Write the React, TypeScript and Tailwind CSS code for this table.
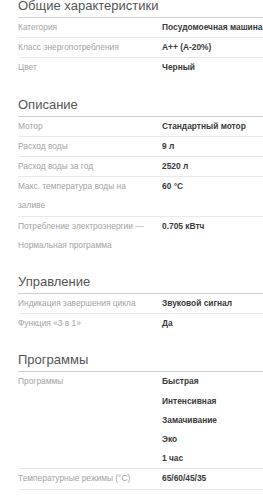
const sections: { title: string; rows: { label: string; values: string[] }[] }[] = [
  {
    title: 'Общие характеристики',
    rows: [
      { label: 'Категория', values: ['Посудомоечная машина'] },
      { label: 'Класс энергопотребления', values: ['A++ (A-20%)'] },
      { label: 'Цвет', values: ['Черный'] },
    ],
  },
  {
    title: 'Описание',
    rows: [
      { label: 'Мотор', values: ['Стандартный мотор'] },
      { label: 'Расход воды', values: ['9 л'] },
      { label: 'Расход воды за год', values: ['2520 л'] },
      { label: 'Макс. температура воды на заливе', values: ['60 °C'] },
      { label: 'Потребление электроэнергии — Нормальная программа', values: ['0.705 кВтч'] },
    ],
  },
  {
    title: 'Управление',
    rows: [
      { label: 'Индикация завершения цикла', values: ['Звуковой сигнал'] },
      { label: 'Функция «3 в 1»', values: ['Да'] },
    ],
  },
  {
    title: 'Программы',
    rows: [
      { label: 'Программы', values: ['Быстрая', 'Интенсивная', 'Замачивание', 'Эко', '1 час'] },
      { label: 'Температурные режимы (°C)', values: ['65/60/45/35'] },
    ],
  },
];

export default function App() {
  return (
    <div className="w-[263px] h-[499px] overflow-hidden bg-white font-['Liberation_Sans',Arial,sans-serif]">
      <div className="-mt-[5px] pl-[18px]">
        {sections.map((s, si) => (
          <section key={s.title} className={si === 0 ? '' : 'mt-[16px]'}>
            <h2 className="h-[22px] leading-[22px] text-[13px] text-[#555] border-b border-[#cfcfcf] box-content">
              {s.title}
            </h2>
            {s.rows.map((r, ri) => {
              const last = ri === s.rows.length - 1 && si !== sections.length - 1;
              return (
                <div
                  key={r.label}
                  className={'flex text-[8.4px] leading-[19.2px] ' + (last ? '' : 'border-b border-[#e9e9e9]')}
                >
                  <div className="w-[144px] shrink-0 pr-[16px] text-[#a3a3a3]">{r.label}</div>
                  <div className="flex-1 font-bold text-[#3a3a3a] whitespace-nowrap">
                    {r.values.map((v) => (
                      <div key={v}>{v}</div>
                    ))}
                  </div>
                </div>
              );
            })}
          </section>
        ))}
      </div>
    </div>
  );
}
